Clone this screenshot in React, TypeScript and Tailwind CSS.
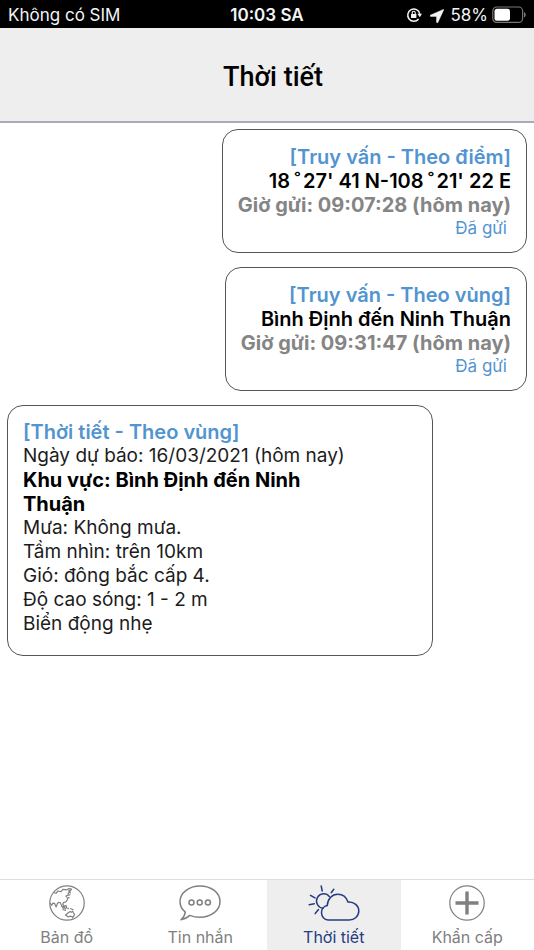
import React from 'react';

type IconProps = { className?: string };

const LockRotationIcon: React.FC<IconProps> = ({ className }) => (
  <svg viewBox="0 0 16 16" className={className} fill="none" stroke="currentColor" aria-hidden="true">
    <path d="M12.6 12A6.100 6.100 0 1 1 13.800 6.800" strokeWidth="1.5" />
    <path d="M11.400 6.800h4.600l-2.200 3.400z" fill="currentColor" stroke="none" />
    <rect x="5" y="7" width="5.4" height="4" rx="0.6" fill="currentColor" stroke="none" />
    <path d="M6.200 7.400V5.800a1.500 1.500 0 0 1 3 0v1.600" strokeWidth="1.1" />
  </svg>
);

const LocationIcon: React.FC<IconProps> = ({ className }) => (
  <svg viewBox="0 0 14 14" className={className} fill="currentColor" aria-hidden="true">
    <path d="M13.300.4.600 6c-.9.400-.7 1.500.2 1.500h5.300c.3 0 .4.100.4.400v5.200c0 .9 1.100 1.100 1.500.2L13.700.9c.2-.4 0-.7-.4-.5z" stroke="currentColor" strokeWidth="0.4" />
  </svg>
);

const BatteryIcon: React.FC<IconProps> = ({ className }) => (
  <svg viewBox="0 0 34 18" className={className} aria-hidden="true">
    <rect x="0.8" y="1" width="29.8" height="15.4" rx="4" fill="none" stroke="#777" strokeWidth="1.2" />
    <rect x="2.5" y="2.7" width="15.5" height="12" rx="2.5" fill="#fff" />
    <path d="M32 6v5.500c1.200-.4 1.700-1.500 1.700-2.700S33.200 6.400 32 6z" fill="#777" />
  </svg>
);

const GlobeIcon: React.FC<IconProps> = ({ className }) => (
  <svg viewBox="0 0 36 36" className={className} fill="none" stroke="currentColor" strokeWidth="1.2" strokeLinejoin="round" aria-hidden="true">
    <circle cx="18" cy="18" r="17.2" />
    <path d="M4.500 7.500l2.500.8 2-2.300 3 .6 2-2.300 4 .5 2-1.200 2.500.6-.8 1.200-2 .4 1.200 1.200-1.800 1 .3 2-2.500 1 2 2.500-1.800 3.300-2.600.8-.8 1.600 1.500 1.900-.8 1.400-1.800-1.600-1.200-3-1.800-.6-1.200 1.200-1.200 3.400-1.700-3.600-1.600-.2-1.200 2.200L1.200 18" />
    <path d="M20.800 6.500l.6 2M19.500 10.500l1.800-1M19 13l1.500-.7" />
    <path d="M12.500 20.500l2 3.200M15 21.500l2-1 .8 2-1.600 1.200zM13.500 24.500l3.500.8M18.500 24l1.300-.9M21 23.500l3.500 1.300" />
    <path d="M16.500 30l2.500-2 1.800-1.300 1.800.5 1-1 2 3.500-1.600 2.400-2.200-.9-2.800.6z" />
    <path d="M23 33.200l1-.4" />
  </svg>
);

const ChatIcon: React.FC<IconProps> = ({ className }) => (
  <svg viewBox="0 0 42 36" className={className} fill="none" stroke="currentColor" strokeWidth="1.5" strokeLinejoin="round" aria-hidden="true">
    <path d="M21 1C9.800 1 1 8 1 16.500c0 4.400 2 8 5.300 10.700C6 30 4.500 32.500 2 34.700c3.600-.6 6.500-2 8.800-4.300 3 1.200 6.500 1.900 10.200 1.900 11.200 0 20-7 20-15.800S32.200 1 21 1z" />
    <circle cx="12.5" cy="17.5" r="2.5" />
    <circle cx="20.7" cy="17.5" r="2.5" />
    <circle cx="28.9" cy="17.5" r="2.5" />
  </svg>
);

const WeatherIcon: React.FC<IconProps> = ({ className }) => (
  <svg viewBox="0 0 52 36" className={className} fill="none" stroke="currentColor" strokeWidth="1.5" strokeLinecap="round" aria-hidden="true">
    <path d="M20 35a7.200 7.200 0 0 1-6.500-7.200c0-3.600 2.400-6.600 5.700-7.200C19.500 14 24 9.200 29.800 9.200c4.600 0 8.600 3 10.200 7.800 6.200-.4 10.800 3.800 10.800 9s-4.400 9-9.600 9z" />
    <path d="M21.400 11.600A7.200 7.200 0 1 0 15.200 23.200" />
    <path d="M13.200 1l1 5M25.800 4.300l-2.600 3.400M2.500 10.300l4.500 2.600M1.200 19.700l5.100-1M7.200 28.600l3.300-4" />
  </svg>
);

const PlusCircleIcon: React.FC<IconProps> = ({ className }) => (
  <svg viewBox="0 0 36 36" className={className} fill="none" stroke="currentColor" aria-hidden="true">
    <circle cx="18" cy="18" r="17.2" strokeWidth="1.2" />
    <path d="M18 6.500v23M6.500 18h23" strokeWidth="3.4" />
  </svg>
);

const Degree = () => <span className="mr-0.5 ml-1">˚</span>;

const queries = [
  {
    title: '[Truy vấn - Theo điểm]',
    place: <>18<Degree />27' 41 N-108<Degree />21' 22 E</>,
    sent: 'Giờ gửi: 09:07:28 (hôm nay)',
  },
  { title: '[Truy vấn - Theo vùng]', place: 'Bình Định đến Ninh Thuận', sent: 'Giờ gửi: 09:31:47 (hôm nay)' },
];

const details = [
  'Ngày dự báo: 16/03/2021 (hôm nay)',
  'Mưa: Không mưa.',
  'Tầm nhìn: trên 10km',
  'Gió: đông bắc cấp 4.',
  'Độ cao sóng: 1 - 2 m',
  'Biển động nhẹ',
];

const tabs = [
  { label: 'Bản đồ', icon: <GlobeIcon className="h-9 w-9" /> },
  { label: 'Tin nhắn', icon: <ChatIcon className="h-9 w-[42px]" /> },
  { label: 'Thời tiết', icon: <WeatherIcon className="h-9 w-[52px]" />, active: true },
  { label: 'Khẩn cấp', icon: <PlusCircleIcon className="h-9 w-9" /> },
];

const StatusBar = () => (
  <div className="grid h-7 grid-cols-3 items-center bg-black px-2 pt-[3px] text-[17px] text-gray-100">
    <span className="whitespace-nowrap">Không có SIM</span>
    <span className="text-center font-semibold">10:03 SA</span>
    <div className="flex items-center justify-end gap-1">
      <LockRotationIcon className="mr-1 mb-0.5 h-4 w-4" />
      <LocationIcon className="mr-0.5 h-3.5 w-3.5" />
      <span>58%</span>
      <BatteryIcon className="mb-0.5 h-[18px] w-[34px]" />
    </div>
  </div>
);

const QueryCard: React.FC<(typeof queries)[number]> = ({ title, place, sent }) => (
  <article className="self-end rounded-2xl border border-[#555] px-[15px] pt-[15px] pb-[13px] text-right font-semibold">
    <h2 className="text-[#5294d0]">{title}</h2>
    <p className="text-black">{place}</p>
    <p className="font-bold text-[#858585]">{sent}</p>
    <p className="pr-1 text-[17px] leading-[22px] font-normal text-[#5294d0]">Đã gửi</p>
  </article>
);

export default function App() {
  return (
    <div className="flex min-h-screen flex-col bg-white font-['Inter','Liberation_Sans',sans-serif]">
      <StatusBar />
      <header className="flex h-[95px] items-center justify-center border-b-2 border-[#aaaabd] bg-[#eee] pt-1.5 pl-3">
        <h1 className="font-['Roboto',sans-serif] text-[27px] font-medium text-black">Thời tiết</h1>
      </header>

      <main className="flex flex-1 flex-col gap-3.5 px-[7px] pt-1.5 text-[20px] leading-6">
        {queries.map((query) => (
          <QueryCard key={query.title} {...query} />
        ))}
        <article className="w-[82%] rounded-2xl border border-[#555] px-[15px] pt-3.5 pb-[19px] text-[19px] text-[#1c1c1c]">
          <h2 className="text-[20px] leading-6 font-semibold text-[#5294d0]">[Thời tiết - Theo vùng]</h2>
          <p>{details[0]}</p>
          <p className="max-w-[300px] text-[20px] leading-6 font-bold text-black">Khu vực: Bình Định đến Ninh Thuận</p>
          {details.slice(1).map((line) => (
            <p key={line}>{line}</p>
          ))}
        </article>
      </main>

      <nav className="grid grid-cols-4 border-t border-[#ddd]">
        {tabs.map((tab) => (
          <button
            key={tab.label}
            type="button"
            aria-current={tab.active ? 'page' : undefined}
            className={`${tab.active ? 'bg-[#eee] text-[#263c82]' : 'text-[#808080]'} flex flex-col items-center gap-[5px] pt-[5px] pb-0.5`}
          >
            {tab.icon}
            <span className="text-[16px] leading-[22px]">{tab.label}</span>
          </button>
        ))}
      </nav>
    </div>
  );
}
